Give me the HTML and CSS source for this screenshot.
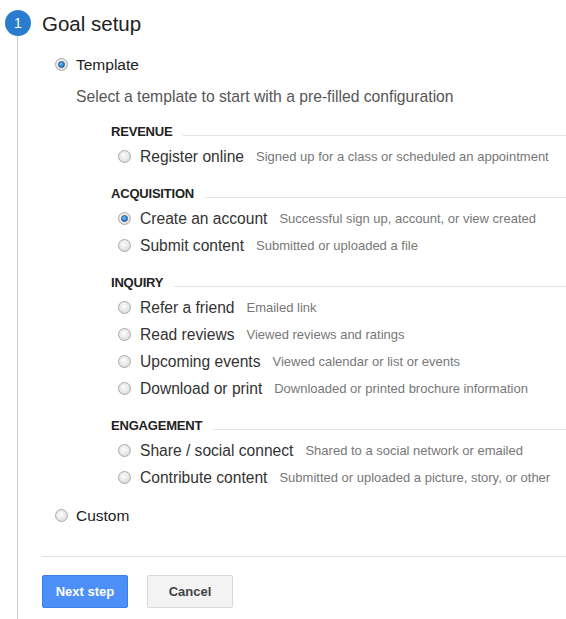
FILE: index.html
```html
<!DOCTYPE html>
<html>
<head>
<meta charset="utf-8">
<link rel="stylesheet" href="styles.css">
</head>
<body>
<div class="step">
  <div class="rail">
    <div class="num">1</div>
    <div class="vline"></div>
  </div>
  <div class="content">
    <h1 class="title">Goal setup</h1>
    <div class="opt opt-top">
      <span class="radio checked"></span><span class="opt-label">Template</span>
    </div>
    <p class="hint">Select a template to start with a pre-filled configuration</p>

    <div class="groups">
      <div class="group">
        <div class="ghead"><span class="gname">REVENUE</span><span class="gline"></span></div>
        <div class="item"><span class="radio"></span><span class="ilabel">Register online</span><span class="idesc">Signed up for a class or scheduled an appointment</span></div>
      </div>
      <div class="group">
        <div class="ghead"><span class="gname">ACQUISITION</span><span class="gline"></span></div>
        <div class="item"><span class="radio checked"></span><span class="ilabel">Create an account</span><span class="idesc">Successful sign up, account, or view created</span></div>
        <div class="item"><span class="radio"></span><span class="ilabel">Submit content</span><span class="idesc">Submitted or uploaded a file</span></div>
      </div>
      <div class="group">
        <div class="ghead"><span class="gname">INQUIRY</span><span class="gline"></span></div>
        <div class="item"><span class="radio"></span><span class="ilabel">Refer a friend</span><span class="idesc">Emailed link</span></div>
        <div class="item"><span class="radio"></span><span class="ilabel">Read reviews</span><span class="idesc">Viewed reviews and ratings</span></div>
        <div class="item"><span class="radio"></span><span class="ilabel">Upcoming events</span><span class="idesc">Viewed calendar or list or events</span></div>
        <div class="item"><span class="radio"></span><span class="ilabel">Download or print</span><span class="idesc">Downloaded or printed brochure information</span></div>
      </div>
      <div class="group">
        <div class="ghead"><span class="gname">ENGAGEMENT</span><span class="gline"></span></div>
        <div class="item"><span class="radio"></span><span class="ilabel">Share / social connect</span><span class="idesc">Shared to a social network or emailed</span></div>
        <div class="item"><span class="radio"></span><span class="ilabel">Contribute content</span><span class="idesc">Submitted or uploaded a picture, story, or other</span></div>
      </div>
    </div>

    <div class="opt opt-custom">
      <span class="radio"></span><span class="opt-label">Custom</span>
    </div>

    <div class="divider"></div>

    <div class="actions">
      <button class="btn btn-primary">Next step</button>
      <button class="btn btn-default">Cancel</button>
    </div>
  </div>
</div>
</body>
</html>
```

FILE: styles.css
```css
html, body {
  margin: 0;
  padding: 0;
  background: #fff;
}
body {
  font-family: "Liberation Sans", Arial, sans-serif;
  color: #222;
}
.step {
  display: flex;
  min-height: 619px;
}
.rail {
  width: 42px;
  flex: none;
  display: flex;
  flex-direction: column;
  padding-top: 10px;
  box-sizing: border-box;
}
.num {
  width: 26px;
  height: 26px;
  margin-left: 5px;
  border-radius: 50%;
  background: #2b7bcf;
  color: #fff;
  font-size: 14px;
  line-height: 26px;
  text-align: center;
}
.vline {
  flex: 1;
  width: 1px;
  margin-left: 17px;
  background: #cfcfcf;
}
.content {
  flex: 1;
  min-width: 0;
}
.title {
  margin: 11px 0 0;
  font-size: 20.5px;
  line-height: 26px;
  font-weight: normal;
  color: #222;
}
.opt {
  display: flex;
  align-items: center;
  height: 27px;
  padding-left: 13px;
}
.opt-top {
  margin-top: 14px;
}
.opt-label {
  margin-left: 8px;
  font-size: 15.5px;
  color: #222;
}
.hint {
  margin: 9px 0 0 34px;
  font-size: 15.7px;
  line-height: 20px;
  color: #555;
}
.groups {
  margin: 12px 0 0 69px;
}
.group + .group {
  margin-top: 11px;
}
.ghead {
  display: flex;
  align-items: baseline;
  height: 24px;
  padding-top: 5px;
  box-sizing: border-box;
}
.gname {
  font-size: 13px;
  font-weight: bold;
  color: #222;
  line-height: 16px;
  letter-spacing: -0.2px;
}
.gline {
  flex: 1;
  margin-left: 11px;
  border-bottom: 1px solid #e3e3e3;
}
.item {
  display: flex;
  align-items: center;
  height: 27px;
  padding-left: 7px;
  white-space: nowrap;
}
.ilabel {
  margin-left: 9px;
  font-size: 15.6px;
  color: #333;
}
.idesc {
  margin-left: 12px;
  font-size: 13px;
  color: #777;
}
.radio {
  position: relative;
  flex: none;
  width: 13px;
  height: 13px;
  border-radius: 50%;
  box-sizing: border-box;
  border: 1px solid #ababab;
  background: radial-gradient(circle at 45% 40%, #fdfdfd 0%, #e6e6e6 55%, #cfcfcf 100%);
}
.radio.checked::after {
  content: "";
  position: absolute;
  left: 2px;
  top: 2px;
  width: 7px;
  height: 7px;
  border-radius: 50%;
  box-sizing: border-box;
  border: 1px solid #2c4f7a;
  background: radial-gradient(circle at 40% 35%, #7cc3ff 0%, #2e8be0 55%, #1b5ea8 100%);
}
.opt-custom {
  margin-top: 11px;
}
.divider {
  margin-top: 27px;
  border-top: 1px solid #e0e0e0;
}
.actions {
  display: flex;
  gap: 19px;
  margin-top: 18px;
}
.btn {
  min-width: 86px;
  height: 33px;
  padding: 0 12px;
  border-radius: 2px;
  font-family: "Liberation Sans", Arial, sans-serif;
  font-size: 13px;
  font-weight: bold;
  box-sizing: border-box;
}
.btn-primary {
  background: #4d8ff9;
  border: 1px solid #3b7fe8;
  color: #fff;
}
.btn-default {
  background: #f3f3f3;
  border: 1px solid #d9d9d9;
  color: #444;
}
```
